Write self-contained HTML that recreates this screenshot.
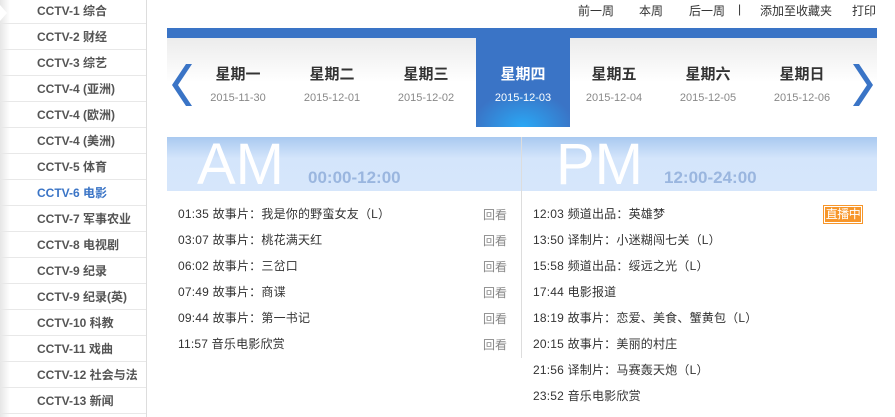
<!DOCTYPE html>
<html><head><meta charset="utf-8"><style>
*{margin:0;padding:0;box-sizing:border-box}
body{width:895px;height:417px;overflow:hidden;background:#fff;font-family:"Liberation Sans","Noto Sans CJK SC",sans-serif;font-size:12px;color:#333;position:relative}
.a{position:absolute;white-space:nowrap}
#side{position:absolute;left:0;top:0;width:147px;height:417px;border-right:1px solid #ddd;background:linear-gradient(90deg,#e6e6e6 0,#fff 10px)}
.si{position:absolute;left:0;width:146px;height:26px;border-bottom:1px solid #e8e8e8;font-weight:bold;color:#555;font-size:12px;padding-left:37px;line-height:26px}
.tab{position:absolute;top:38px;width:94px;height:89px;text-align:center}
.tab b{display:block;margin-top:25px;font-size:15px;color:#333}
.tab i{display:block;font-style:normal;margin-top:8px;font-size:11px;color:#888}
.tab.on{background:radial-gradient(ellipse 60% 45% at 50% 100%,#2aa8f5,#3a74c6 90%)}
.tab.on b,.tab.on i{color:#fff}
.hd{position:absolute;top:137px;height:54px;background:linear-gradient(#a9c9f0,#d4e5fb 40%,#d6e6fb)}
.big{position:absolute;top:-6px;font-size:58px;color:#fff;font-family:"Liberation Sans",sans-serif}
.rng{position:absolute;top:31px;font-size:17px;font-weight:bold;color:#9ab6df}
.r{position:absolute;font-size:12px;color:#333;line-height:14px;letter-spacing:0.2px}
.hk{position:absolute;color:#888;font-size:12px}
</style></head><body>
<div id="side">
<div class="si" style="top:-2px">CCTV-1 综合</div>
<div class="si" style="top:24px">CCTV-2 财经</div>
<div class="si" style="top:50px">CCTV-3 综艺</div>
<div class="si" style="top:76px">CCTV-4 (亚洲)</div>
<div class="si" style="top:102px">CCTV-4 (欧洲)</div>
<div class="si" style="top:128px">CCTV-4 (美洲)</div>
<div class="si" style="top:154px">CCTV-5 体育</div>
<div class="si" style="top:180px;color:#3a74c6">CCTV-6 电影</div>
<div class="si" style="top:206px">CCTV-7 军事农业</div>
<div class="si" style="top:232px">CCTV-8 电视剧</div>
<div class="si" style="top:258px">CCTV-9 纪录</div>
<div class="si" style="top:284px">CCTV-9 纪录(英)</div>
<div class="si" style="top:310px">CCTV-10 科教</div>
<div class="si" style="top:336px">CCTV-11 戏曲</div>
<div class="si" style="top:362px">CCTV-12 社会与法</div>
<div class="si" style="top:388px">CCTV-13 新闻</div>
</div>
<div class="a" style="left:0;top:5px;width:0;height:0;border:8px solid transparent;border-left:7px solid #fff"></div>

<div class="a" style="left:578px;top:2px;color:#333">前一周</div>
<div class="a" style="left:639px;top:2px;color:#333">本周</div>
<div class="a" style="left:689px;top:2px;color:#333">后一周</div>
<div class="a" style="left:738px;top:2px;color:#333">|</div>
<div class="a" style="left:760px;top:2px;color:#333">添加至收藏夹</div>
<div class="a" style="left:852px;top:2px;color:#333">打印</div>

<div class="a" style="left:167px;top:28px;width:710px;height:10px;background:#3a74c6"></div>
<div class="a" style="left:167px;top:38px;width:710px;height:89px;background:linear-gradient(#ececec,#fff 50%,#fff)"></div>
<svg class="a" style="left:172px;top:62px" width="22" height="46"><path d="M20 2 L6 23 L20 44 L14 44 L0 23 L14 2Z" fill="#3a74c6"/></svg>
<svg class="a" style="left:851px;top:62px" width="22" height="46"><path d="M2 2 L16 23 L2 44 L8 44 L22 23 L8 2Z" fill="#3a74c6"/></svg>
<div class="tab" style="left:191px"><b>星期一</b><i>2015-11-30</i></div>
<div class="tab" style="left:285px"><b>星期二</b><i>2015-12-01</i></div>
<div class="tab" style="left:379px"><b>星期三</b><i>2015-12-02</i></div>
<div class="tab on" style="left:476px"><b>星期四</b><i>2015-12-03</i></div>
<div class="tab" style="left:567px"><b>星期五</b><i>2015-12-04</i></div>
<div class="tab" style="left:661px"><b>星期六</b><i>2015-12-05</i></div>
<div class="tab" style="left:755px"><b>星期日</b><i>2015-12-06</i></div>

<div class="hd" style="left:167px;width:354px"><div class="big" style="left:30px">AM</div><div class="rng" style="left:141px">00:00-12:00</div></div>
<div class="hd" style="left:522px;width:355px"><div class="big" style="left:34px">PM</div><div class="rng" style="left:142px">12:00-24:00</div></div>
<div class="a" style="left:521px;top:137px;width:1px;height:221px;background:#ddd"></div>

<div class="r" style="left:178px;top:207px">01:35 故事片：我是你的野蛮女友（L）</div><div class="hk" style="left:483px;top:206px">回看</div>
<div class="r" style="left:178px;top:233px">03:07 故事片：桃花满天红</div><div class="hk" style="left:483px;top:232px">回看</div>
<div class="r" style="left:178px;top:259px">06:02 故事片：三岔口</div><div class="hk" style="left:483px;top:258px">回看</div>
<div class="r" style="left:178px;top:285px">07:49 故事片：商谍</div><div class="hk" style="left:483px;top:284px">回看</div>
<div class="r" style="left:178px;top:311px">09:44 故事片：第一书记</div><div class="hk" style="left:483px;top:310px">回看</div>
<div class="r" style="left:178px;top:337px">11:57 音乐电影欣赏</div><div class="hk" style="left:483px;top:336px">回看</div>

<div class="r" style="left:533px;top:207px">12:03 频道出品：英雄梦</div>
<div class="a" style="left:823px;top:205px;width:40px;height:19px;background:#f7962a;padding:1px"><div style="border:1px solid #fff;color:#fff;font-size:12px;line-height:15px;text-align:center;letter-spacing:-0.5px">直播中</div></div>
<div class="r" style="left:533px;top:233px">13:50 译制片：小迷糊闯七关（L）</div>
<div class="r" style="left:533px;top:259px">15:58 频道出品：绥远之光（L）</div>
<div class="r" style="left:533px;top:285px">17:44 电影报道</div>
<div class="r" style="left:533px;top:311px">18:19 故事片：恋爱、美食、蟹黄包（L）</div>
<div class="r" style="left:533px;top:337px">20:15 故事片：美丽的村庄</div>
<div class="r" style="left:533px;top:363px">21:56 译制片：马赛轰天炮（L）</div>
<div class="r" style="left:533px;top:389px">23:52 音乐电影欣赏</div>
</body></html>
